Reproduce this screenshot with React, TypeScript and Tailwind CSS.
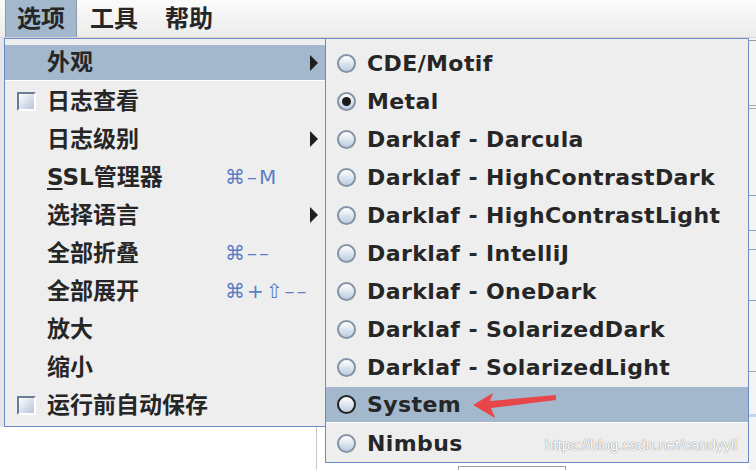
import React from 'react'

const latin = { fontFamily: '"DejaVu Sans", "Noto Sans CJK SC", sans-serif' }

const mainItems = [
  { label: '外观', sub: true, active: true },
  { label: '日志查看', check: true },
  { label: '日志级别', sub: true },
  { label: 'SSL管理器', key: '⌘–M', underline: true },
  { label: '选择语言', sub: true },
  { label: '全部折叠', key: '⌘––' },
  { label: '全部展开', key: '⌘+⇧––' },
  { label: '放大' },
  { label: '缩小' },
  { label: '运行前自动保存', check: true },
]

const lafItems = [
  'CDE/Motif',
  'Metal',
  'Darklaf - Darcula',
  'Darklaf - HighContrastDark',
  'Darklaf - HighContrastLight',
  'Darklaf - IntelliJ',
  'Darklaf - OneDark',
  'Darklaf - SolarizedDark',
  'Darklaf - SolarizedLight',
  'System',
  'Nimbus',
]

const CheckBox = () => (
  <span className="block h-[19px] w-[19px] border-2 border-t-[#6a7c92] border-l-[#6a7c92] border-r-white border-b-white bg-gradient-to-br from-white to-[#b2c4da]" />
)

const Radio = ({ checked, armed }: { checked?: boolean; armed?: boolean }) => (
  <span
    className={
      'flex h-[19px] w-[19px] items-center justify-center rounded-full border-2 bg-gradient-to-b from-white to-[#bccde0] ' +
      (armed ? 'border-[#222]' : 'border-[#8494a6]')
    }
  >
    {checked && <span className="h-[9px] w-[9px] rounded-full bg-[#1a1a1a]" />}
  </span>
)

const Arrow = () => (
  <svg width="8" height="16" viewBox="0 0 8 16">
    <polygon points="0,0 8,8 0,16" fill="#1e1e1e" />
  </svg>
)

const Row = ({ active, children }: { active?: boolean; children: React.ReactNode }) => (
  <div className="h-[38px] pt-px">
    <div
      className={
        'flex h-[36px] items-center ' +
        (active ? 'border-b border-white bg-[#a3b8cc]' : '')
      }
    >
      {children}
    </div>
  </div>
)

export default function App() {
  return (
    <div className="relative h-[470px] w-[756px] overflow-hidden bg-white text-[#262626]" style={latin}>
      {/* menu bar */}
      <div className="flex h-[38px] items-stretch border-b border-[#d6d6d6] bg-gradient-to-b from-[#fbfbfb] to-[#ececec] pl-[5px] text-[24px] font-bold">
        <div className="flex w-[72px] items-center justify-center border-x border-[#8d9aa8] bg-[#a3b8cc]">选项</div>
        <div className="flex items-center pl-[13px]">工具</div>
        <div className="flex items-center pl-[27px]">帮助</div>
      </div>

      {/* background window strips */}
      <div className="absolute left-0 top-[38px] h-[389px] w-[4px] bg-[#e6e6e6]" />
      <div className="absolute left-[316px] top-[427px] h-[43px] w-px bg-[#c9c9c9]" />
      <div className="absolute left-[458px] top-[466px] h-[4px] w-[108px] border border-b-0 border-[#9aa0a8]" />
      <div className="absolute right-0 top-[38px] flex h-[432px] w-[7px] flex-col bg-[#f4f4f4]">
        <div className="mt-[2px] h-px bg-[#9b9b9b]" />
        <div className="mt-[64px] h-[4px] border-y border-[#a9a9a9]" />
        <div className="mt-[86px] h-px bg-[#8da0b8]" />
        <div className="mt-[34px] h-px bg-[#8da0b8]" />
        <div className="mt-[18px] h-px bg-[#8da0b8]" />
        <div className="mt-[50px] h-px bg-[#8da0b8]" />
        <div className="mt-[70px] h-px bg-[#a8a8a8]" />
        <div className="mt-[42px] h-[3px] bg-[#c5d6ea]" />
      </div>

      {/* main dropdown */}
      <div className="absolute left-[4px] top-[38px] h-[389px] w-[322px] border border-[#6a8bc8] bg-[#eeeeee] pt-[5px]">
        {mainItems.map((it) => (
          <Row key={it.label} active={it.active}>
            <div className="flex w-[42px] justify-start pl-[12px]">{it.check && <CheckBox />}</div>
            <div className="w-[178px] text-[23px] font-bold">
              {it.underline ? (
                <>
                  <span className="underline decoration-2 underline-offset-[3px]">S</span>
                  {it.label.slice(1)}
                </>
              ) : (
                it.label
              )}
            </div>
            <div className="flex-1 text-[20px] tracking-[2px] text-[#5b7ec4]">{it.key}</div>
            <div className="flex w-[15px] justify-start">{it.sub && <Arrow />}</div>
          </Row>
        ))}
      </div>

      {/* look & feel submenu */}
      <div className="absolute left-[325px] top-[38px] h-[425px] w-[424px] border border-[#6a8bc8] bg-[#eeeeee] pt-[5px]">
        {lafItems.map((name) => (
          <Row key={name} active={name === 'System'}>
            <div className="pl-[11px] pr-[11px]">
              <Radio checked={name === 'Metal'} armed={name === 'System'} />
            </div>
            <div className="text-[22px] font-bold tracking-[0.4px]">{name}</div>
          </Row>
        ))}
      </div>

      {/* red annotation arrow */}
      <svg className="absolute left-0 top-0" width="756" height="470" viewBox="0 0 756 470">
        <polygon
          points="473,405 493,393 490,401 556,395 556,400 491,408 495,418"
          fill="#e8474a"
        />
      </svg>

      {/* watermark */}
      <div
        className="absolute left-[545px] top-[434px] text-[15px] text-white"
        style={{ fontFamily: '"Liberation Sans", sans-serif', textShadow: '0 0 1px #8c8c8c, 0 0 1px #8c8c8c' }}
      >
        https://blog.csdn.net/candyyii
      </div>
    </div>
  )
}
